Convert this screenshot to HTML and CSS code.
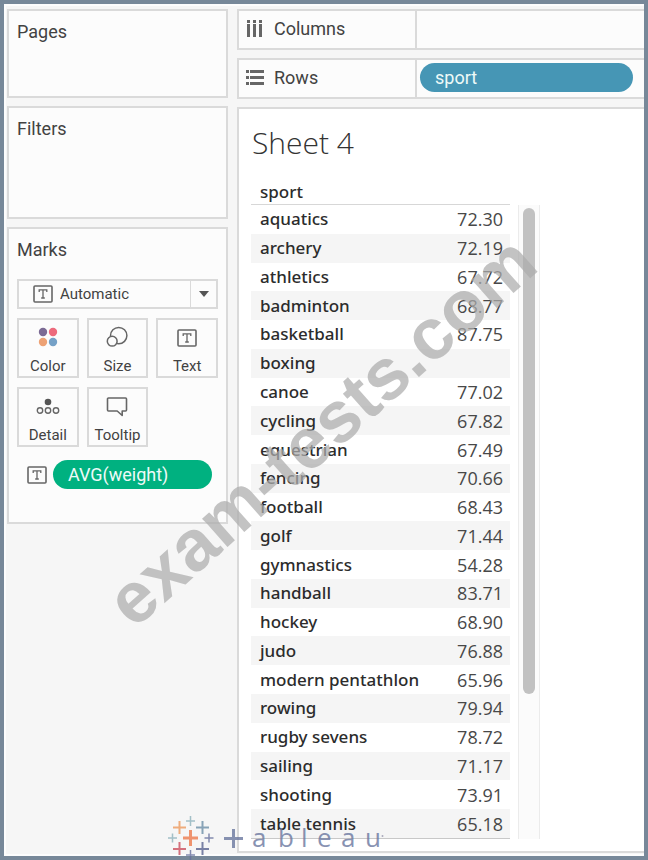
FILE: index.html
```html
<!DOCTYPE html>
<html lang="en">
<head>
<meta charset="utf-8">
<title>Sheet 4</title>
<link rel="stylesheet" href="styles.css">
</head>
<body>
<svg class="defs" aria-hidden="true">
  <symbol id="text-icon" viewBox="0 0 20 18">
    <rect x="1" y="1" width="18" height="16" rx="1" fill="none" stroke="#666" stroke-width="1.6"/>
    <path d="M6.2 7V4.8h7.6V7M10 4.8v8M8.2 13h3.6" fill="none" stroke="#666" stroke-width="1.3"/>
  </symbol>
</svg>
<div class="workspace">
  <aside class="side">
    <section class="card pages"><h2>Pages</h2></section>
    <section class="card filters"><h2>Filters</h2></section>
    <section class="card marks">
      <h2><label for="mark-type">Marks</label></h2>
      <div class="mark-type">
        <svg class="ticon"><use href="#text-icon"/></svg>
        <select id="mark-type"><option>Automatic</option></select>
        <span class="drop"><svg width="12" height="8" viewBox="0 0 12 8"><path d="M1 1h10L6 7z" fill="#555"/></svg></span>
      </div>
      <div class="mark-buttons">
        <button type="button">
          <svg width="22" height="22" viewBox="0 0 22 22"><circle cx="6" cy="6" r="4.2" fill="#7b6a94"/><circle cx="16" cy="6" r="4.2" fill="#ed6a7c"/><circle cx="6" cy="16" r="4.2" fill="#eda275"/><circle cx="16" cy="16" r="4.2" fill="#75a1c7"/></svg>
          Color</button>
        <button type="button">
          <svg width="22" height="22" viewBox="0 0 22 22" fill="#fcfcfc" stroke="#666" stroke-width="1.5"><circle cx="12.7" cy="9.6" r="8.2"/><circle cx="6.2" cy="15.2" r="4.9"/></svg>
          Size</button>
        <button type="button">
          <svg width="20" height="22" viewBox="0 -3 20 22"><use href="#text-icon" width="20" height="18"/></svg>
          Text</button>
        <button type="button">
          <svg width="24" height="22" viewBox="0 0 24 22" fill="none" stroke="#666" stroke-width="1.4"><circle cx="12" cy="7" r="3.3" fill="#555" stroke="none"/><circle cx="4" cy="15.5" r="2.7"/><circle cx="12" cy="15.5" r="2.7"/><circle cx="20" cy="15.5" r="2.7"/></svg>
          Detail</button>
        <button type="button">
          <svg width="22" height="22" viewBox="0 0 22 22" fill="none" stroke="#666" stroke-width="1.6" stroke-linejoin="round"><path d="M2.500 3h17a1 1 0 0 1 1 1v11a1 1 0 0 1-1 1h-3.300V20.500l-5-4.500h-8.700a1 1 0 0 1-1-1v-11a1 1 0 0 1 1-1z"/></svg>
          Tooltip</button>
      </div>
      <div class="encoding">
        <svg class="ticon"><use href="#text-icon"/></svg>
        <button type="button" class="pill measure">AVG(weight)</button>
      </div>
    </section>
  </aside>
  <main class="main">
    <section class="shelf">
      <h2><svg width="18" height="18" viewBox="0 0 18 18" fill="#666"><path d="M1 0h3v3H1zM7 0h3v3H7zM13 0h3v3h-3zM1 4h3v13H1zM7 4h3v13H7zM13 4h3v13h-3z"/></svg>Columns</h2>
      <div class="drop-area"></div>
    </section>
    <section class="shelf">
      <h2><svg width="18" height="18" viewBox="0 0 18 18" fill="#666"><path d="M0 1h3v3H0zM4 1h14v3H4zM0 7h3v3H0zM4 7h14v3H4zM0 13h3v3H0zM4 13h14v3H4z"/></svg>Rows</h2>
      <div class="drop-area"><button type="button" class="pill dimension">sport</button></div>
    </section>
    <section class="sheet">
      <h1>Sheet 4</h1>
      <div class="field">sport</div>
      <div class="view">
        <table aria-label="Average weight by sport">
          <tbody>
            <tr><th scope="row">aquatics</th><td>72.30</td></tr>
            <tr><th scope="row">archery</th><td>72.19</td></tr>
            <tr><th scope="row">athletics</th><td>67.72</td></tr>
            <tr><th scope="row">badminton</th><td>68.77</td></tr>
            <tr><th scope="row">basketball</th><td>87.75</td></tr>
            <tr><th scope="row">boxing</th><td></td></tr>
            <tr><th scope="row">canoe</th><td>77.02</td></tr>
            <tr><th scope="row">cycling</th><td>67.82</td></tr>
            <tr><th scope="row">equestrian</th><td>67.49</td></tr>
            <tr><th scope="row">fencing</th><td>70.66</td></tr>
            <tr><th scope="row">football</th><td>68.43</td></tr>
            <tr><th scope="row">golf</th><td>71.44</td></tr>
            <tr><th scope="row">gymnastics</th><td>54.28</td></tr>
            <tr><th scope="row">handball</th><td>83.71</td></tr>
            <tr><th scope="row">hockey</th><td>68.90</td></tr>
            <tr><th scope="row">judo</th><td>76.88</td></tr>
            <tr><th scope="row">modern pentathlon</th><td>65.96</td></tr>
            <tr><th scope="row">rowing</th><td>79.94</td></tr>
            <tr><th scope="row">rugby sevens</th><td>78.72</td></tr>
            <tr><th scope="row">sailing</th><td>71.17</td></tr>
            <tr><th scope="row">shooting</th><td>73.91</td></tr>
            <tr><th scope="row">table tennis</th><td>65.18</td></tr>
          </tbody>
        </table>
        <div class="track"><div class="thumb"></div></div>
      </div>
    </section>
  </main>
</div>
<svg class="overlay" width="648" height="860" viewBox="0 0 648 860">
  <text class="stamp" transform="translate(134 630) rotate(-41.6)">exam-tests.com</text>
  <g fill="none" stroke-width="2" opacity=".8">
    <path d="M190.500 830v16M183 838h15" stroke="#ee7b4d" stroke-width="3"/>
    <path d="M179.500 821v13M173 827.500h13" stroke="#ee9a5e"/>
    <path d="M202.500 821v13M196 827.500h13" stroke="#6d8fa8"/>
    <path d="M179.500 842v13M173 849h13" stroke="#cc5060"/>
    <path d="M202.500 842v13M196 849h13" stroke="#5b6591"/>
    <path d="M190.500 816v10M186 821h9M172.500 833.500v9M168 838h9" stroke="#8fb3bd" stroke-width="1.500"/>
    <path d="M209 833.500v9M204.500 838h9M190.500 850v10M186 855h9" stroke="#67719d" stroke-width="1.500"/>
    <path d="M233.500 829v19M224 838.500h19" stroke="#6b789f" stroke-width="3"/>
  </g>
  <g class="brand">
    <text x="252" y="847">a</text><text x="278" y="847">b</text><text x="301" y="847">l</text><text x="317" y="847">e</text><text x="341" y="847">a</text><text x="365" y="847">u</text>
  </g>
  <circle cx="382.500" cy="836" r="1" fill="#aab"/>
</svg>
</body>
</html>
```
FILE: styles.css
```css
* { box-sizing: border-box; }
body {
  margin: 0;
  position: relative;
  background: #f6f6f6;
  color: #424242;
  font-family: Roboto, "Liberation Sans", sans-serif;
}
h1, h2 { margin: 0; font-weight: 400; }
button { font: inherit; color: inherit; margin: 0; }
.defs { position: absolute; width: 0; height: 0; }
.workspace {
  min-height: 100vh;
  border: 4px solid #778899;
  padding: 5px 0 3px 3px;
  display: grid;
  grid-template-columns: 221px 1fr;
  gap: 9px;
  box-shadow: inset 2px 2px #fdfdfd, inset 0 -2px #fdfdfd;
}
.side, .main { display: flex; flex-direction: column; gap: 8px; min-width: 0; }
.card, .shelf, .sheet { border: 2px solid #dadada; background: #fcfcfc; }
.card { padding: 9px 8px; }
h2 { font-size: 18px; line-height: 24px; }
.pages { height: 89px; }
.filters { height: 113px; }
.marks { padding-bottom: 33px; }
.mark-type {
  margin-top: 17px;
  height: 30px;
  border: 2px solid #dadada;
  display: flex;
  align-items: center;
  padding-left: 14px;
}
.ticon { width: 20px; height: 18px; flex: none; }
select {
  flex: 1;
  min-width: 0;
  appearance: none;
  border: 0;
  background: none;
  padding: 0 0 0 7px;
  font: 15px/24px Roboto, sans-serif;
  color: #424242;
}
.drop {
  width: 26px;
  align-self: stretch;
  border-left: 1px solid #dadada;
  display: flex;
  align-items: center;
  justify-content: center;
}
.mark-buttons {
  margin-top: 9px;
  display: grid;
  grid-template-columns: repeat(3, 1fr);
  gap: 9px 8px;
}
.mark-buttons button {
  height: 60px;
  padding: 6px 0 0;
  border: 2px solid #dadada;
  background: #fcfcfc;
  font-size: 15px;
  line-height: 20px;
  display: flex;
  flex-direction: column;
  align-items: center;
  justify-content: space-between;
}
.encoding {
  margin-top: 13px;
  padding: 0 6px 0 10px;
  display: flex;
  align-items: center;
  gap: 6px;
}
.pill {
  height: 29px;
  border: 0;
  border-radius: 15px;
  padding: 0 15px;
  text-align: left;
  font-size: 18px;
  line-height: 29px;
  color: #eefaf8;
}
.measure { flex: 1; background: #00b180; }
.dimension { width: 213px; background: #4696b5; }
.shelf { display: flex; height: 41px; border-right: 0; }
.shelf h2 {
  width: 178px;
  flex: none;
  border-right: 2px solid #dadada;
  padding: 0 0 2px 7px;
  display: flex;
  align-items: center;
  gap: 10px;
}
.drop-area { flex: 1; padding: 3px; }
.sheet { flex: 1; border-right: 0; background: #fff; padding: 14px 12px 12px; }
h1 {
  font: 300 30px/40px "Open Sans", sans-serif;
  color: #333;
  padding-left: 1px;
}
.field {
  margin-top: 17px;
  padding-left: 9px;
  width: 259px;
  border-bottom: 1px solid #d7d7d7;
  font: 500 17px/24px "Noto Sans", sans-serif;
  color: #2c2c2c;
}
.view { display: flex; gap: 8px; }
table {
  width: 259px;
  height: 634px;
  border-collapse: collapse;
  border-bottom: 1px solid #c8c8c8;
  line-height: 24px;
}
th, td { padding: 0; }
th {
  padding-left: 9px;
  text-align: left;
  font: 500 17px/24px "Noto Sans", sans-serif;
  color: #2c2c2c;
}
td {
  padding-right: 7px;
  text-align: right;
  font: 18px/24px "Open Sans", sans-serif;
  color: #484848;
}
tr:nth-child(even) { background: #f5f5f5; }
.track {
  width: 22px;
  padding: 3px 4px 0;
  background: #fbfbfb;
  border: solid #ebebeb;
  border-width: 0 1px;
}
.thumb { width: 12px; height: 77%; border-radius: 6px; background: #c1c1c1; }
.overlay { position: absolute; left: 0; top: 0; pointer-events: none; }
.stamp {
  font: bold 72px "Liberation Sans", sans-serif;
  fill: #adadad;
  opacity: .72;
}
.brand { font: 500 26px "Open Sans", sans-serif; fill: #6b789f; opacity: .8; }
```
